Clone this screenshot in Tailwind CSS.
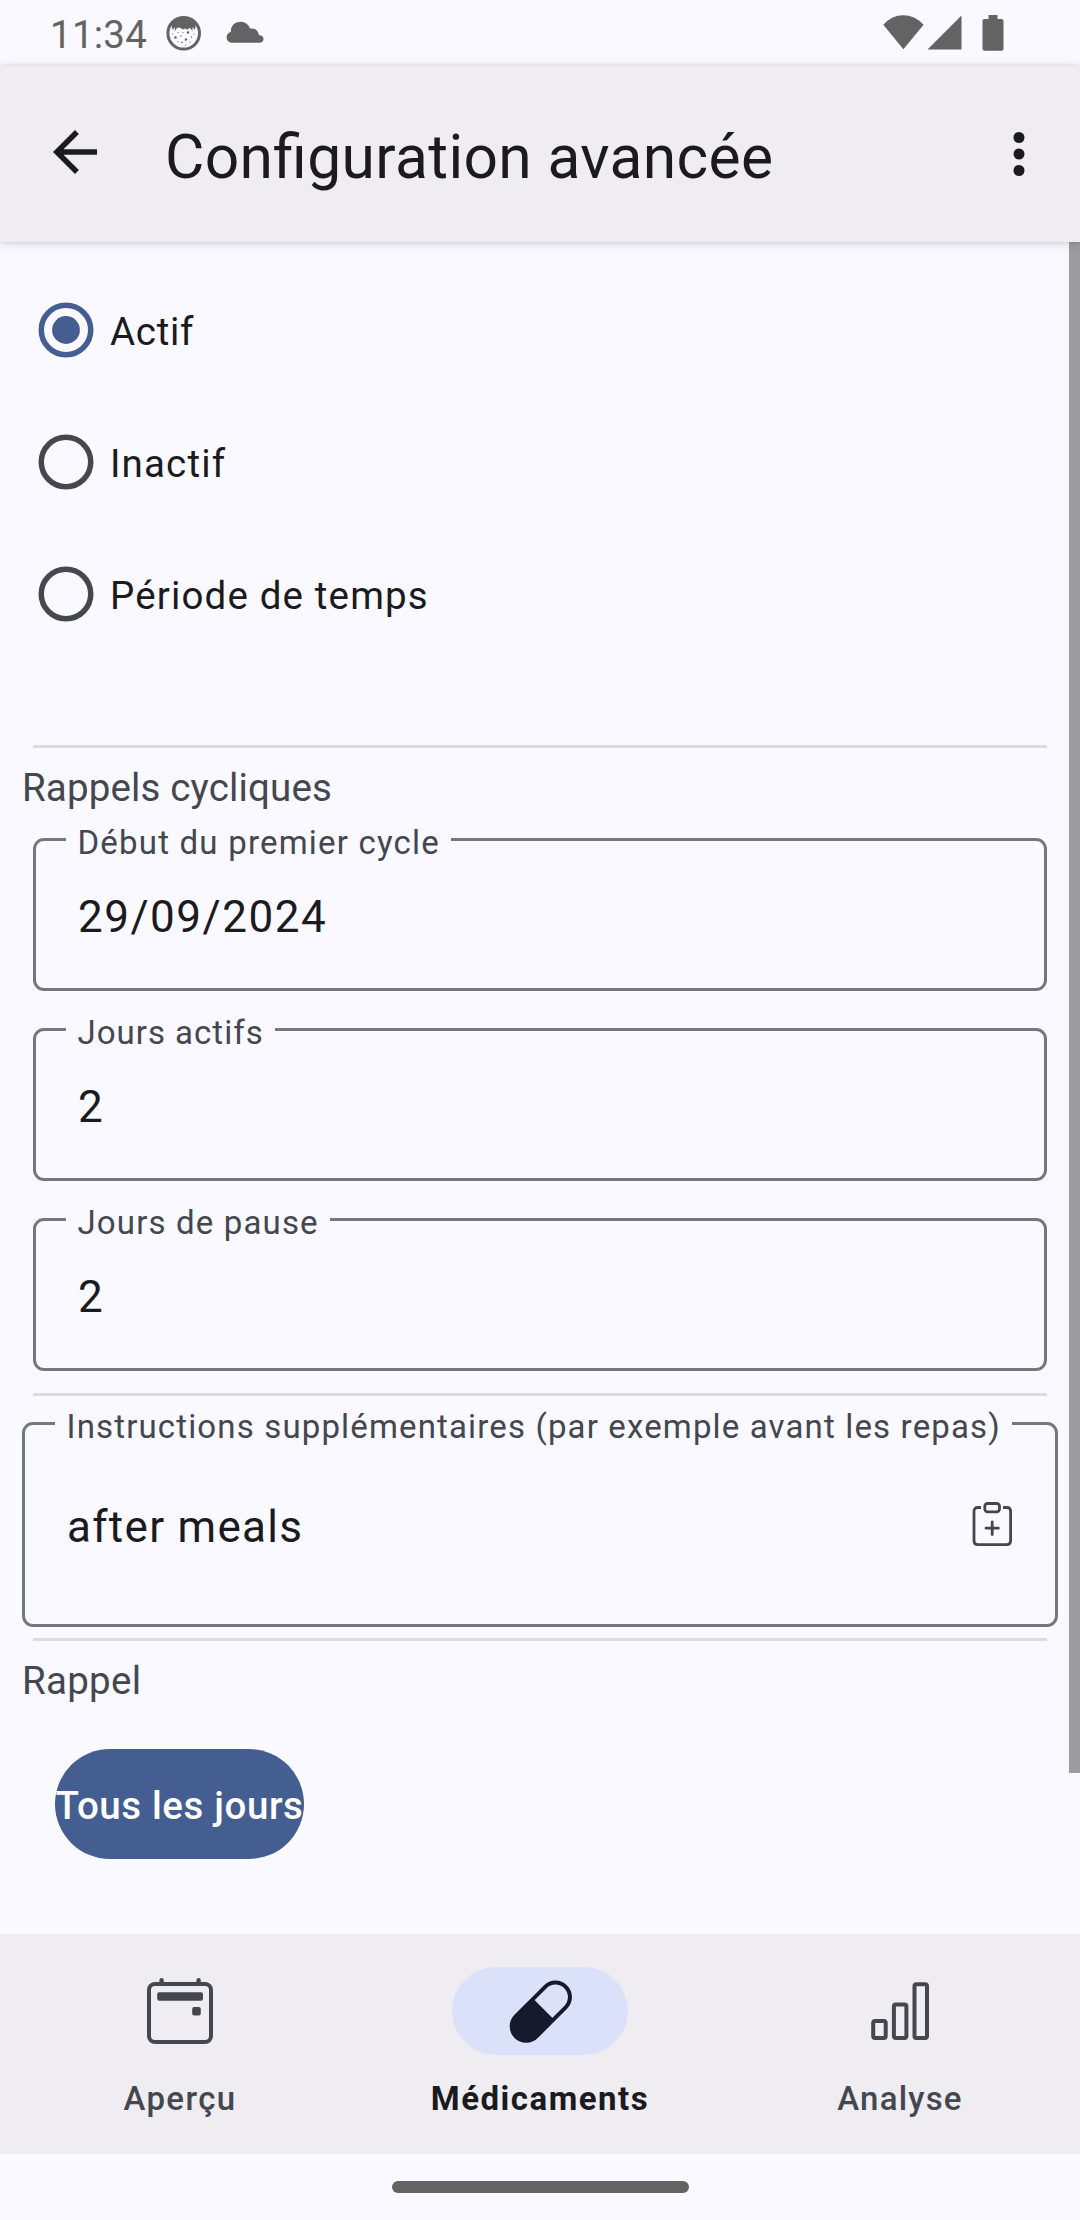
<!DOCTYPE html>
<html lang="fr">
<head>
<meta charset="utf-8">
<title>Configuration avancée</title>
<script src="https://cdn.jsdelivr.net/npm/@tailwindcss/browser@4"></script>
</head>
<body class="flex h-[2220px] w-[1080px] flex-col overflow-hidden bg-[#faf9ff] font-[Roboto,sans-serif] text-[#1b1b1f]">

  <!-- Status bar -->
  <div class="flex h-[66px] shrink-0 items-start pl-[50px] text-[#636363]">
    <span class="mt-[12px] w-[116px] text-[38.5px] leading-[46px] tracking-[0.25px]">11:34</span>
    <svg class="mt-[15px] size-[36px]" viewBox="0 0 36 36">
      <circle cx="17.7" cy="18.3" r="15.8" fill="#fbfaff" stroke="currentColor" stroke-width="3"/>
      <path d="M5 8Q17.700-3 30 8L29 15L26.500 12L26.500 16L24 13Q22 13 21.500 15L19.500 13.500L17 14.500L15.500 13.500Q12.500 12 11 13L8.500 16.500L9 12L6.500 15Z" fill="currentColor"/>
      <g fill="currentColor">
        <circle cx="9.500" cy="22.500" r="1.200"/><circle cx="22" cy="17.500" r="1.200"/><circle cx="20" cy="24.500" r="1.200"/><circle cx="15" cy="21" r=".7"/>
        <circle cx="25.500" cy="22" r=".7"/><circle cx="16" cy="27.500" r=".8"/><circle cx="12" cy="17.500" r=".6"/><circle cx="28" cy="19" r=".6"/>
        <circle cx="24" cy="27" r=".6"/><circle cx="17" cy="17.500" r=".6"/><circle cx="6.500" cy="19" r=".6"/><circle cx="12" cy="26.500" r=".6"/><circle cx="19.500" cy="30" r=".6"/>
      </g>
    </svg>
    <svg class="mt-[21px] ml-[23px] h-[22px] w-[39px]" viewBox="0 0 39 22" fill="currentColor">
      <path d="M6.200 21.800A5.600 5.600 0 0 1 5.700 10.900Q6 1 15.500.7Q22.500.8 25 7.600Q32.500 6.500 34 14.100Q38.500 14.800 38.500 18Q38.400 21.500 34.500 21.800Z"/>
    </svg>
    <svg class="mt-[15px] ml-[619px] h-[35px] w-[41px]" viewBox="0 0 41 35" fill="currentColor"><path d="M.3 9.700Q9 .3 20.300.3T40.600 9.700L20.400 34.300Z"/></svg>
    <svg class="mt-[15px] ml-[3px] h-[35px] w-[35px]" viewBox="0 0 35 35" fill="currentColor"><path d="M.5 34.600L34.500.6V34.600Z"/></svg>
    <svg class="mt-[15px] ml-[19.500px] h-[36px] w-[22px]" viewBox="0 0 22 36" fill="currentColor"><path d="M6.500 0H15.500V4H19.500Q21.500 4 21.500 6V33.700Q21.500 35.700 19.500 35.700H2.500Q.5 35.700 .5 33.700V6Q.5 4 2.500 4H6.500Z"/></svg>
  </div>

  <!-- App bar -->
  <header class="relative z-10 flex h-[176px] shrink-0 items-center bg-[#efedf2] pl-[42px] shadow-[0_2px_12px_rgba(0,0,0,0.12),0_0_4px_rgba(0,0,0,0.14)]">
    <svg class="mb-[4px] size-[66px]" viewBox="0 0 24 24" fill="currentColor"><path d="M20 11H7.830l5.590-5.590L12 4l-8 8 8 8 1.410-1.410L7.830 13H20v-2z"/></svg>
    <h1 class="ml-[57px] flex-1 pt-[7px] text-[60.5px] leading-[72px] tracking-[0.36px] [font-feature-settings:'liga'_1]">Configuration avancée</h1>
    <svg class="mr-[28px] size-[66px]" viewBox="0 0 24 24" fill="currentColor"><circle cx="12" cy="6" r="2"/><circle cx="12" cy="12" r="2"/><circle cx="12" cy="18" r="2"/></svg>
  </header>

  <main class="relative flex h-[1692px] shrink-0 flex-col px-[22px] pt-[22px]">
    <div class="absolute top-0 right-0 h-[1531px] w-[11px] bg-[#9c9ca1]"></div>

    <div class="flex flex-col text-[38.5px] leading-[46px] tracking-[1.15px]">
      <label class="flex h-[132px] items-center gap-[16px] pl-[16px]">
        <svg class="size-[56px] text-[#445e91]" viewBox="0 0 56 56"><circle cx="28" cy="28" r="24.750" fill="none" stroke="currentColor" stroke-width="5.500"/><circle cx="28" cy="28" r="13.900" fill="currentColor"/></svg>
        <span class="pt-[4px] tracking-[0.7px]">Actif</span>
      </label>
      <label class="flex h-[132px] items-center gap-[16px] pl-[16px]">
        <svg class="size-[56px] text-[#44474f]" viewBox="0 0 56 56"><circle cx="28" cy="28" r="24.750" fill="none" stroke="currentColor" stroke-width="5.500"/></svg>
        <span class="pt-[4px]">Inactif</span>
      </label>
      <label class="flex h-[132px] items-center gap-[16px] pl-[16px]">
        <svg class="size-[56px] text-[#44474f]" viewBox="0 0 56 56"><circle cx="28" cy="28" r="24.750" fill="none" stroke="currentColor" stroke-width="5.500"/></svg>
        <span class="pt-[4px]">Période de temps</span>
      </label>
    </div>

    <div class="mx-[11px] mt-[85px] h-[3px] shrink-0 bg-[#dcdcdf]"></div>
    <h2 class="mt-[17px] text-[38.5px] leading-[45px] tracking-[0.15px] text-[#44474f]">Rappels cycliques</h2>

    <div class="mx-[11px] mt-[28px] flex flex-col gap-[37px]">
      <div class="relative h-[153px] rounded-[11px] border-[3px] border-[#74777f] pt-[50px] pl-[42px] text-[44px] leading-[52px] tracking-[1.5px]">
        <span class="absolute -top-[18px] left-[30px] w-[385px] bg-[#faf9ff] pl-[11.5px] text-[33px] leading-[39px] tracking-[1.2px] whitespace-nowrap text-[#44474f]">Début du premier cycle</span>29/09/2024
      </div>
      <div class="relative h-[153px] rounded-[11px] border-[3px] border-[#74777f] pt-[50px] pl-[42px] text-[44px] leading-[52px] tracking-[1.5px]">
        <span class="absolute -top-[18px] left-[30px] w-[209px] bg-[#faf9ff] pl-[11.5px] text-[33px] leading-[39px] tracking-[1px] whitespace-nowrap text-[#44474f]">Jours actifs</span>2
      </div>
      <div class="relative h-[153px] rounded-[11px] border-[3px] border-[#74777f] pt-[50px] pl-[42px] text-[44px] leading-[52px] tracking-[1.5px]">
        <span class="absolute -top-[18px] left-[30px] w-[264px] bg-[#faf9ff] pl-[11.5px] text-[33px] leading-[39px] tracking-[1.15px] whitespace-nowrap text-[#44474f]">Jours de pause</span>2
      </div>
    </div>

    <div class="mx-[11px] mt-[22px] h-[3px] shrink-0 bg-[#dcdcdf]"></div>

    <div class="relative mt-[26px] flex h-[205px] shrink-0 items-start justify-between rounded-[11px] border-[3px] border-[#74777f] pr-[43px] pl-[42px]">
      <span class="absolute -top-[18px] left-[30px] w-[957px] bg-[#faf9ff] pl-[11.5px] text-[33px] leading-[39px] tracking-[1.15px] whitespace-nowrap text-[#44474f]">Instructions supplémentaires (par exemple avant les repas)</span>
      <span class="mt-[76px] text-[44px] leading-[52px] tracking-[1.3px]">after meals</span>
      <svg class="mt-[77px] h-[45px] w-[40px] text-[#44474f]" viewBox="0 0 40 45" fill="none" stroke="currentColor" stroke-width="2.8">
        <path d="M9 5.500H6Q2 5.500 2 9.500V38.500Q2 42.700 6 42.700H34.500Q38.600 42.700 38.600 38.500V9.500Q38.600 5.500 34.500 5.500H31"/>
        <rect x="12.800" y="1.500" width="14.700" height="8.300" rx="2.800"/>
        <path d="M20.200 20V32.500M14 26.200H26.400" stroke-linecap="round"/>
      </svg>
    </div>

    <div class="mx-[11px] mt-[11px] h-[3px] shrink-0 bg-[#dcdcdf]"></div>
    <h2 class="mt-[17px] text-[38.5px] leading-[45px] tracking-[0.27px] text-[#44474f]">Rappel</h2>
    <button class="mt-[46px] ml-[33px] flex h-[110px] w-[249px] shrink-0 items-center justify-center rounded-full bg-[#445e91] pt-[3px] text-[38.5px] font-medium tracking-[0.6px] whitespace-nowrap text-white">Tous les jours</button>
  </main>

  <!-- Bottom navigation -->
  <nav class="grid h-[220px] shrink-0 grid-cols-3 bg-[#efedf2] pt-[33px] text-[33px] leading-[40px] font-medium tracking-[1.4px] text-[#44474f]">
    <div class="flex flex-col items-center">
      <span class="flex h-[88px] w-[176px] items-center justify-center">
        <svg class="size-[66px]" viewBox="0 0 66 66" fill="currentColor">
          <rect x="2" y="6" width="62" height="58" rx="6" fill="none" stroke="currentColor" stroke-width="4"/>
          <path d="M14.600 6V2.200M51.600 6V2.200" stroke="currentColor" stroke-width="4.400" stroke-linecap="round"/>
          <rect x="10.200" y="14.200" width="45.800" height="8.600" rx="2"/><rect x="45.200" y="29" width="8.600" height="8.500" rx="2"/>
        </svg>
      </span>
      <span class="mt-[24px]">Aperçu</span>
    </div>
    <div class="flex flex-col items-center">
      <span class="flex h-[88px] w-[176px] items-center justify-center rounded-full bg-[#dce1fa]">
        <svg class="size-[66px] text-[#151b2c]" viewBox="0 0 66 66" fill="currentColor">
          <g transform="translate(33.800 33.700) rotate(45)">
            <rect x="-14.500" y="-35.200" width="29" height="70.400" rx="14.500" fill="none" stroke="currentColor" stroke-width="4"/>
            <path d="M-14.500-3.800H14.500V20.700A14.500 14.500 0 0 1-14.500 20.700Z"/>
          </g>
        </svg>
      </span>
      <span class="mt-[24px] font-bold tracking-[1.5px] text-[#1b1b1f]">Médicaments</span>
    </div>
    <div class="flex flex-col items-center">
      <span class="flex h-[88px] w-[176px] items-center justify-center">
        <svg class="size-[66px]" viewBox="0 0 66 66" fill="none" stroke="currentColor" stroke-width="4">
          <rect x="6.200" y="43" width="12.500" height="17" rx="2"/><rect x="26.900" y="26.500" width="12.500" height="33.500" rx="2"/><rect x="47.500" y="6.200" width="12.500" height="53.800" rx="2"/>
        </svg>
      </span>
      <span class="mt-[24px] tracking-[1.2px]">Analyse</span>
    </div>
  </nav>

  <!-- Gesture handle -->
  <div class="flex h-[66px] shrink-0 justify-center pt-[27px]"><div class="h-[12px] w-[297px] rounded-full bg-[#636363]"></div></div>
</body>
</html>
